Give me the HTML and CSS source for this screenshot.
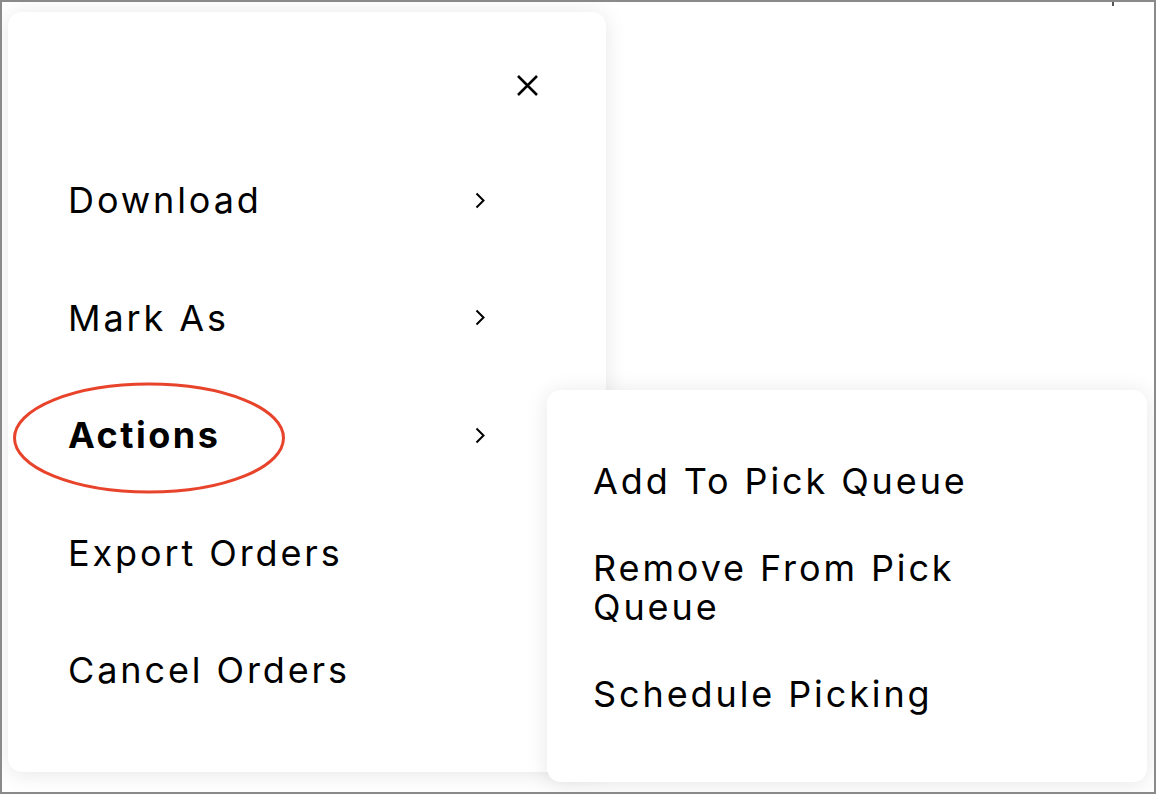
FILE: index.html
```html
<!DOCTYPE html>
<html lang="en">
<head>
<meta charset="utf-8">
<title>Orders menu</title>
<link rel="stylesheet" href="styles.css">
</head>
<body>
<div class="frame">
  <span class="tick"></span>
  <nav class="menu">
    <div class="menu-head">
      <button class="close" aria-label="Close">
        <svg width="21" height="21" viewBox="0 0 21 21"><path d="M1 1 L20 20 M20 1 L1 20" stroke="#000" stroke-width="2.5" fill="none"/></svg>
      </button>
    </div>
    <ul class="menu-list">
      <li class="menu-item"><span>Download</span><svg class="chev" width="10" height="17" viewBox="0 0 10 17"><path d="M1.5 1.5 L8.5 8.5 L1.5 15.5" stroke="#000" stroke-width="2" fill="none"/></svg></li>
      <li class="menu-item"><span>Mark As</span><svg class="chev" width="10" height="17" viewBox="0 0 10 17"><path d="M1.5 1.5 L8.5 8.5 L1.5 15.5" stroke="#000" stroke-width="2" fill="none"/></svg></li>
      <li class="menu-item active"><span>Actions</span><svg class="chev" width="10" height="17" viewBox="0 0 10 17"><path d="M1.5 1.5 L8.5 8.5 L1.5 15.5" stroke="#000" stroke-width="2" fill="none"/></svg></li>
      <li class="menu-item"><span>Export Orders</span></li>
      <li class="menu-item"><span>Cancel Orders</span></li>
    </ul>
  </nav>
  <div class="submenu">
    <ul class="sub-list">
      <li class="sub-item">Add To Pick Queue</li>
      <li class="sub-item">Remove From Pick Queue</li>
      <li class="sub-item">Schedule Picking</li>
    </ul>
  </div>
  <svg class="mark" width="274" height="114" viewBox="0 0 274 114"><ellipse cx="137" cy="57" rx="134.5" ry="54" fill="none" stroke="#e8432b" stroke-width="3"/></svg>
</div>
</body>
</html>
```

FILE: styles.css
```css
* { box-sizing: border-box; }
html, body { margin: 0; padding: 0; background: #fff; }
body {
  font-family: Inter, "Noto Sans", sans-serif;
  color: #000;
}
.frame {
  position: relative;
  width: 1156px;
  height: 794px;
  border: 2px solid #8a8a8a;
  background: #fff;
  overflow: hidden;
  padding: 10px 0 0 6px;
}
.tick {
  position: absolute;
  left: 1110px;
  top: 0;
  width: 2px;
  height: 4px;
  background: #555;
}
.menu {
  width: 598px;
  height: 760px;
  background: #fff;
  border-radius: 14px;
  box-shadow: 0 2px 22px rgba(0,0,0,0.10);
  padding: 63px 68px 0 60px;
}
.menu-head {
  display: flex;
  justify-content: flex-end;
}
.close {
  width: 21px;
  height: 21px;
  padding: 0;
  border: 0;
  background: none;
  display: block;
}
.close svg { display: block; }
.menu-list {
  list-style: none;
  margin: 85px 53px 0 0;
  padding: 0;
  display: flex;
  flex-direction: column;
  gap: 79.6px;
}
.menu-item {
  display: flex;
  align-items: center;
  justify-content: space-between;
  height: 38px;
  font-size: 36px;
  line-height: 38px;
  letter-spacing: 2.9px;
  font-weight: 400;
}
.menu-item.active { font-weight: 700; letter-spacing: 2.5px; }
.chev { display: block; flex: none; }
.submenu {
  position: absolute;
  left: 545px;
  top: 388px;
  width: 600px;
  height: 392px;
  background: #fff;
  border-radius: 14px;
  box-shadow: 0 2px 22px rgba(0,0,0,0.10);
  padding: 71.6px 0 0 46px;
}
.sub-list {
  list-style: none;
  margin: 0;
  padding: 0;
  width: 400px;
  display: flex;
  flex-direction: column;
  gap: 49px;
}
.sub-item {
  font-size: 36px;
  line-height: 38.6px;
  letter-spacing: 2.9px;
}
.mark {
  position: absolute;
  left: 10px;
  top: 379px;
  display: block;
}
```
